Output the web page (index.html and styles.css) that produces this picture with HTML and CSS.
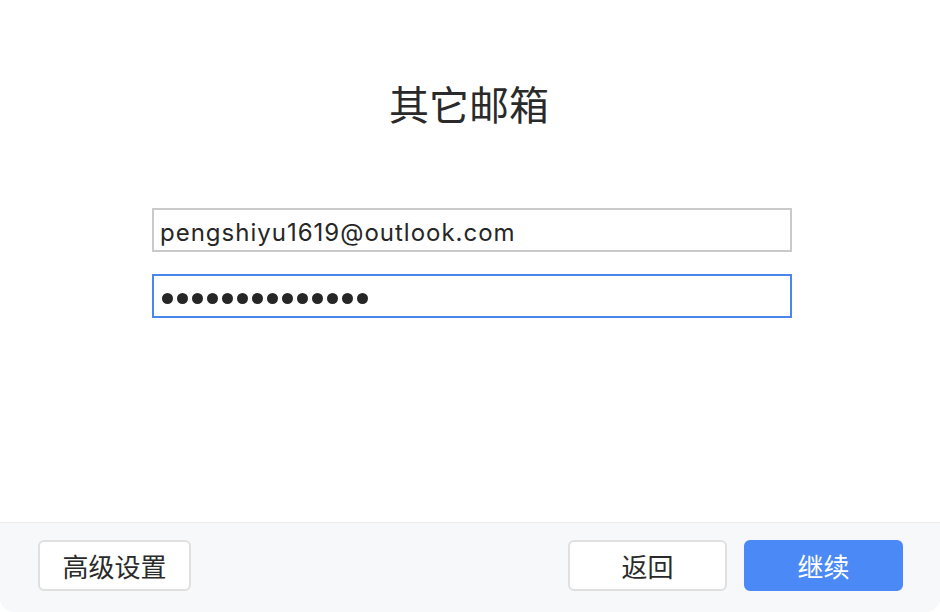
FILE: index.html
```html
<!DOCTYPE html>
<html lang="zh">
<head>
<meta charset="utf-8">
<title>其它邮箱</title>
<link rel="stylesheet" href="styles.css">
</head>
<body>
<div class="window">
  <main class="content">
    <h1 class="title">其它邮箱</h1>
    <form class="form">
      <div class="field field-email">pengshiyu1619@outlook.com</div>
      <div class="field field-password focused" aria-label="密码">
        <span class="dot"></span><span class="dot"></span><span class="dot"></span><span class="dot"></span><span class="dot"></span><span class="dot"></span><span class="dot"></span><span class="dot"></span><span class="dot"></span><span class="dot"></span><span class="dot"></span><span class="dot"></span><span class="dot"></span><span class="dot"></span>
      </div>
    </form>
  </main>
  <footer class="footer">
    <button class="btn btn-advanced" type="button">高级设置</button>
    <div class="spacer"></div>
    <button class="btn btn-back" type="button">返回</button>
    <button class="btn btn-primary" type="button">继续</button>
  </footer>
</div>
</body>
</html>
```
FILE: styles.css
```css
html, body {
  margin: 0;
  padding: 0;
  background: #ffffff;
}
body {
  font-family: Inter, "Liberation Sans", "Noto Sans CJK SC", sans-serif;
  color: #2a2a2a;
}
.window {
  width: 940px;
  height: 612px;
  display: flex;
  flex-direction: column;
  background: #ffffff;
}
.content {
  flex: 1;
  display: flex;
  flex-direction: column;
  align-items: center;
  padding-top: 78px;
  padding-left: 4px;
}
.title {
  margin: 0;
  font-family: "Noto Sans CJK SC", sans-serif;
  font-weight: 400;
  font-size: 40px;
  line-height: 50px;
  color: #2a2a2a;
  margin-left: -6px;
}
.form {
  margin-top: 80px;
  display: flex;
  flex-direction: column;
  gap: 22px;
}
.field {
  box-sizing: border-box;
  width: 640px;
  height: 44px;
  border: 2px solid #cacaca;
  background: #fff;
  padding: 0 6px;
  display: flex;
  align-items: center;
  font-size: 24px;
  color: #262626;
}
.field-email {
  letter-spacing: 1px;
  padding-top: 4px;
}
.field.focused {
  border-color: #4a86ec;
}
.field-password {
  gap: 4px;
  padding-left: 8px;
  padding-top: 5px;
}
.dot {
  width: 11px;
  height: 11px;
  border-radius: 50%;
  background: #262626;
  flex: none;
}
.footer {
  box-sizing: border-box;
  height: 90px;
  border-top: 1px solid #ebebeb;
  background: #f7f8fa;
  border-radius: 0 0 14px 14px;
  display: flex;
  align-items: flex-start;
  padding: 17px 37px 0 38px;
  gap: 17px;
}
.spacer {
  flex: 1;
}
.btn {
  box-sizing: border-box;
  height: 51px;
  padding: 0;
  border: 2px solid #e0e0e0;
  border-radius: 6px;
  background: #ffffff;
  font-family: "Noto Sans CJK SC", sans-serif;
  font-size: 26px;
  color: #2a2a2a;
  cursor: pointer;
}
.btn-advanced {
  width: 153px;
}
.btn-back {
  width: 159px;
}
.btn-primary {
  width: 159px;
  border-color: #4a89f6;
  background: #4a89f6;
  color: #ffffff;
}
```
